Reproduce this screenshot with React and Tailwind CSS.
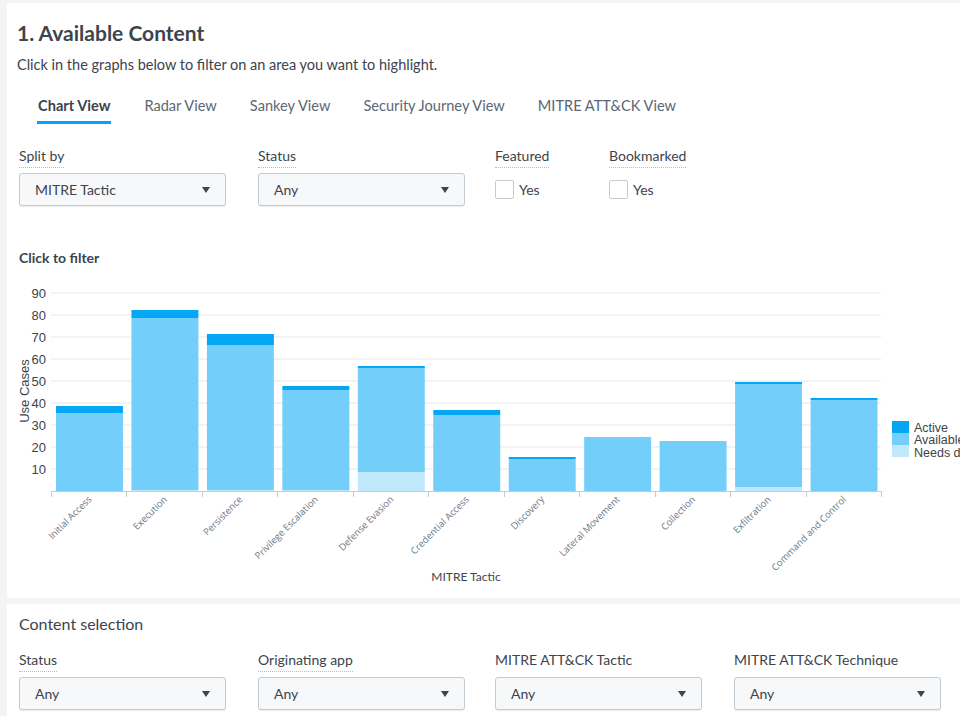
import React from "react";

const FONT = { fontFamily: "Lato, 'Open Sans', sans-serif" };

function Caret() {
  return (
    <svg width="8" height="6" viewBox="0 0 8 6" className="shrink-0">
      <polygon points="0,0 8,0 4,6" fill="#3c444d" />
    </svg>
  );
}

function Select({ value }) {
  return (
    <div className="flex h-[33px] w-[207px] items-center justify-between rounded-[3px] border border-[#c3cbd4] bg-[#f7f8fa] pl-[15px] pr-[15px] text-[14px] text-[#3c444d] shadow-[0_1px_1px_rgba(0,0,0,0.08)]">
      <span>{value}</span>
      <Caret />
    </div>
  );
}

function Label({ children, dotted = true }) {
  return (
    <div className="flex h-[27px] items-start">
      <span
        className={
          "text-[14px] leading-[20px] text-[#3c444d] " +
          (dotted ? "border-b border-dotted border-[#b5bec8] pb-px" : "")
        }
      >
        {children}
      </span>
    </div>
  );
}

function Field({ label, value, dotted = true }) {
  return (
    <div className="flex flex-col">
      <Label dotted={dotted}>{label}</Label>
      <Select value={value} />
    </div>
  );
}

function CheckField({ label }) {
  return (
    <div className="flex flex-col">
      <Label>{label}</Label>
      <div className="flex h-[33px] items-center gap-[5px]">
        <div className="h-[19px] w-[19px] rounded-[2px] border border-[#c3cbd4] bg-white" />
        <span className="text-[14px] text-[#3c444d]">Yes</span>
      </div>
    </div>
  );
}

const BARS = [
  ["Initial Access", 406, 413, 491],
  ["Execution", 310, 318, 490],
  ["Persistence", 334, 345, 490],
  ["Privilege Escalation", 386, 390, 490],
  ["Defense Evasion", 366, 368, 472],
  ["Credential Access", 410, 415, 491],
  ["Discovery", 457, 459, 491],
  ["Lateral Movement", 437, 437, 491],
  ["Collection", 441, 441, 491],
  ["Exfiltration", 382, 384, 487],
  ["Command and Control", 398, 400, 491],
];

const ACTIVE = "#05a6f3";
const AVAIL = "#74cefa";
const NEEDS = "#bfe8fb";

function Chart() {
  const x0 = 51;
  const x1 = 881;
  const step = (x1 - x0) / 11;
  const base = 491;
  const yTicks = [10, 20, 30, 40, 50, 60, 70, 80, 90];
  return (
    <svg width="953" height="310" viewBox="7 280 953 310" className="block">
      {yTicks.map((v) => {
        const y = base - v * 2.2;
        return (
          <g key={v}>
            <line x1={x0} x2={x1} y1={y} y2={y} stroke="#e3e7eb" strokeWidth="1" />
            <text
              x="46"
              y={y + 4.5}
              textAnchor="end"
              fontSize="13"
              fill="#3c444d"
              style={{ fontFamily: "'Liberation Sans', Arial, sans-serif" }}
            >
              {v}
            </text>
          </g>
        );
      })}
      <text
        transform="translate(28.5,391) rotate(-90)"
        textAnchor="middle"
        fontSize="13"
        fill="#3c444d"
        style={{ fontFamily: "'Liberation Sans', Arial, sans-serif" }}
      >
        Use Cases
      </text>
      {BARS.map(([name, top, mid, needsTop], i) => {
        const bx = x0 + i * step + 5;
        const w = step - 8.5;
        const cx = x0 + i * step + step / 2;
        return (
          <g key={name}>
            {mid > top && <rect x={bx} y={top} width={w} height={mid - top} fill={ACTIVE} />}
            {needsTop > mid && <rect x={bx} y={mid} width={w} height={needsTop - mid} fill={AVAIL} />}
            {base > needsTop && <rect x={bx} y={needsTop} width={w} height={base - needsTop} fill={NEEDS} />}
            <text
              transform={`translate(${cx + 3.5},${500}) rotate(-45)`}
              textAnchor="end"
              fontSize="9.5"
              fill="#6b7785"
              style={{ fontFamily: "'Open Sans', sans-serif" }}
            >
              {name}
            </text>
          </g>
        );
      })}
      <line x1={x0} x2={x1} y1={base + 0.5} y2={base + 0.5} stroke="#c3cbd4" strokeWidth="1" />
      {Array.from({ length: 12 }).map((_, i) => {
        const x = Math.round(x0 + i * step) + 0.5;
        return <line key={i} x1={x} x2={x} y1={base} y2={base + 6} stroke="#c3cbd4" strokeWidth="1" />;
      })}
      <text
        x="466"
        y="581"
        textAnchor="middle"
        fontSize="12"
        fill="#3c444d"
        style={{ fontFamily: "Lato, sans-serif" }}
      >
        MITRE Tactic
      </text>
      <rect x="892" y="421" width="17" height="12" fill={ACTIVE} />
      <rect x="892" y="433" width="17" height="12" fill={AVAIL} />
      <rect x="892" y="445" width="17" height="12" fill={NEEDS} />
      {[
        ["Active", 431.5],
        ["Available", 444],
        ["Needs data", 456.5],
      ].map(([t, y]) => (
        <text
          key={t}
          x="914"
          y={y}
          fontSize="12.5"
          fill="#3c444d"
          style={{ fontFamily: "'Liberation Sans', Arial, sans-serif" }}
        >
          {t}
        </text>
      ))}
    </svg>
  );
}

export default function App() {
  const tabs = ["Chart View", "Radar View", "Sankey View", "Security Journey View", "MITRE ATT&CK View"];
  return (
    <div className="h-[716px] w-[960px] overflow-hidden bg-[#f2f4f5] pl-[7px] pt-[3px]" style={FONT}>
      <div className="flex h-[595px] flex-col bg-white">
        <h1 className="ml-[10px] mt-[18px] text-[21px] font-bold leading-[24px] text-[#3c444d]">
          1. Available Content
        </h1>
        <p className="ml-[10px] mt-[10px] text-[14.5px] leading-[20px] text-[#3c444d]">
          Click in the graphs below to filter on an area you want to highlight.
        </p>
        <div className="ml-[30px] mt-[21px] flex gap-[33px]">
          {tabs.map((t, i) => (
            <div
              key={t}
              className={
                "border-b-[3px] pb-[5px] text-[14.6px] leading-[20px] " +
                (i === 0
                  ? "border-[#00a4fd] px-px font-bold text-[#3c444d]"
                  : "border-transparent text-[#5c6773]")
              }
            >
              {t}
            </div>
          ))}
        </div>
        <div className="ml-[12px] mt-[22px] flex">
          <div className="w-[239px]">
            <Field label="Split by" value="MITRE Tactic" />
          </div>
          <div className="w-[237px]">
            <Field label="Status" value="Any" />
          </div>
          <div className="w-[114px]">
            <CheckField label="Featured" />
          </div>
          <div>
            <CheckField label="Bookmarked" />
          </div>
        </div>
        <div className="ml-[12px] mt-[42px] text-[14px] font-bold leading-[20px] text-[#3c444d]">
          Click to filter
        </div>
        <div className="mt-[12px]">
          <Chart />
        </div>
      </div>
      <div className="mt-[6px] flex h-[120px] flex-col bg-white">
        <div className="ml-[12px] mt-[9px] text-[16px] leading-[22px] text-[#3c444d]">Content selection</div>
        <div className="ml-[12px] mt-[15px] flex">
          <div className="w-[239px]">
            <Field label="Status" value="Any" />
          </div>
          <div className="w-[237px]">
            <Field label="Originating app" value="Any" />
          </div>
          <div className="w-[239px]">
            <Field label="MITRE ATT&CK Tactic" value="Any" dotted={false} />
          </div>
          <div>
            <Field label="MITRE ATT&CK Technique" value="Any" dotted={false} />
          </div>
        </div>
      </div>
    </div>
  );
}
